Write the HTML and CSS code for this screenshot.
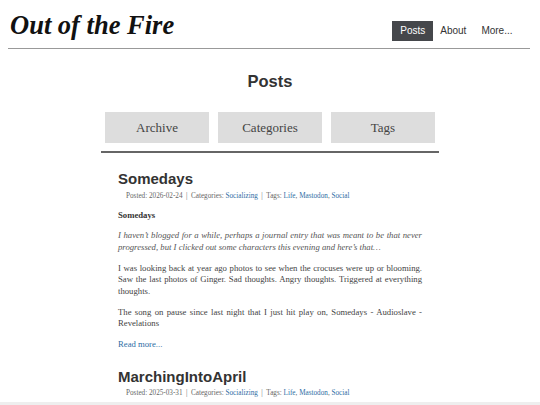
FILE: index.html
```html
<!DOCTYPE html>
<html lang="en">
<head>
<meta charset="utf-8">
<title>Out of the Fire</title>
<link rel="stylesheet" href="styles.css">
</head>
<body>
<header class="site-header">
  <h1 class="site-title">Out of the Fire</h1>
  <nav class="site-nav">
    <a class="nav-item active" href="#">Posts</a>
    <a class="nav-item" href="#">About</a>
    <a class="nav-item" href="#">More...</a>
  </nav>
</header>
<main class="main">
  <h2 class="page-title">Posts</h2>
  <div class="tabs">
    <a class="tab" href="#">Archive</a>
    <a class="tab" href="#">Categories</a>
    <a class="tab" href="#">Tags</a>
  </div>
  <div class="posts">
    <article class="post">
      <h3 class="post-title">Somedays</h3>
      <div class="meta">Posted: 2026-02-24<span class="sep">|</span>Categories: <a href="#">Socializing</a><span class="sep">|</span>Tags: <a href="#">Life</a>, <a href="#">Mastodon</a>, <a href="#">Social</a></div>
      <p class="lead"><strong>Somedays</strong></p>
      <p class="italic">I haven’t blogged for a while, perhaps a journal entry that was meant to be that never progressed, but I clicked out some characters this evening and here’s that…</p>
      <p>I was looking back at year ago photos to see when the crocuses were up or blooming. Saw the last photos of Ginger. Sad thoughts. Angry thoughts. Triggered at everything thoughts.</p>
      <p>The song on pause since last night that I just hit play on, Somedays - Audioslave - Revelations</p>
      <p class="more"><a href="#">Read more...</a></p>
    </article>
    <article class="post">
      <h3 class="post-title">MarchingIntoApril</h3>
      <div class="meta">Posted: 2025-03-31<span class="sep">|</span>Categories: <a href="#">Socializing</a><span class="sep">|</span>Tags: <a href="#">Life</a>, <a href="#">Mastodon</a>, <a href="#">Social</a></div>
    </article>
  </div>
</main>
<div class="bottom-strip"></div>
</body>
</html>
```
FILE: styles.css
```css
html, body {
  margin: 0;
  padding: 0;
  background: #fff;
}
body {
  font-family: "Liberation Serif", "Times New Roman", serif;
  color: #444;
}
a {
  text-decoration: none;
}
.site-header {
  display: flex;
  justify-content: space-between;
  align-items: flex-start;
  height: 49px;
  box-sizing: border-box;
  margin: 0 10px 0 8px;
  padding: 10px 10px 0 2px;
  border-bottom: 1px solid #999;
}
.site-title {
  margin: 0;
  font-family: "Liberation Serif", "Times New Roman", serif;
  font-style: italic;
  font-weight: bold;
  font-size: 26.5px;
  line-height: 30px;
  color: #111;
}
.site-nav {
  display: flex;
  margin-top: 11px;
}
.nav-item {
  font-family: "Liberation Sans", Arial, sans-serif;
  font-size: 10px;
  line-height: 20px;
  padding: 0 7.5px;
  color: #333;
}
.nav-item.active {
  background: #45474b;
  color: #fff;
  padding: 0 7.5px 0 8px;
}
.main {
  width: 338px;
  margin: 0 auto;
}
.page-title {
  margin: 22px 0 0;
  text-align: center;
  font-family: "Liberation Sans", Arial, sans-serif;
  font-weight: bold;
  font-size: 16.5px;
  line-height: 20px;
  color: #333;
}
.tabs {
  display: flex;
  gap: 9px;
  margin-top: 21px;
  padding: 0 4px 8px;
  border-bottom: 2px solid #666;
}
.tab {
  flex: 1;
  height: 31px;
  display: flex;
  align-items: center;
  justify-content: center;
  background: #ddd;
  color: #444;
  font-size: 13px;
}
.posts {
  padding: 0 17px;
}
.post-title {
  margin: 17px 0 2.5px;
  font-family: "Liberation Sans", Arial, sans-serif;
  font-weight: bold;
  font-size: 15px;
  line-height: 18px;
  color: #333;
}
.meta {
  padding-left: 8px;
  font-size: 7.2px;
  line-height: 10px;
  color: #666;
}
.meta a {
  color: #2e6da4;
}
.sep {
  margin: 0 3.5px;
}
.post p {
  margin: 9px 0;
  font-size: 8.7px;
  line-height: 11.7px;
  text-align: justify;
}
.post p.lead {
  color: #333;
}
.post p.italic {
  font-style: italic;
  color: #555;
}
.post p.more {
  margin-bottom: 0;
}
.more a {
  color: #2e6da4;
}
.bottom-strip {
  position: fixed;
  left: 0;
  right: 0;
  bottom: 0;
  height: 3px;
  background: #eeeeee;
}
```
